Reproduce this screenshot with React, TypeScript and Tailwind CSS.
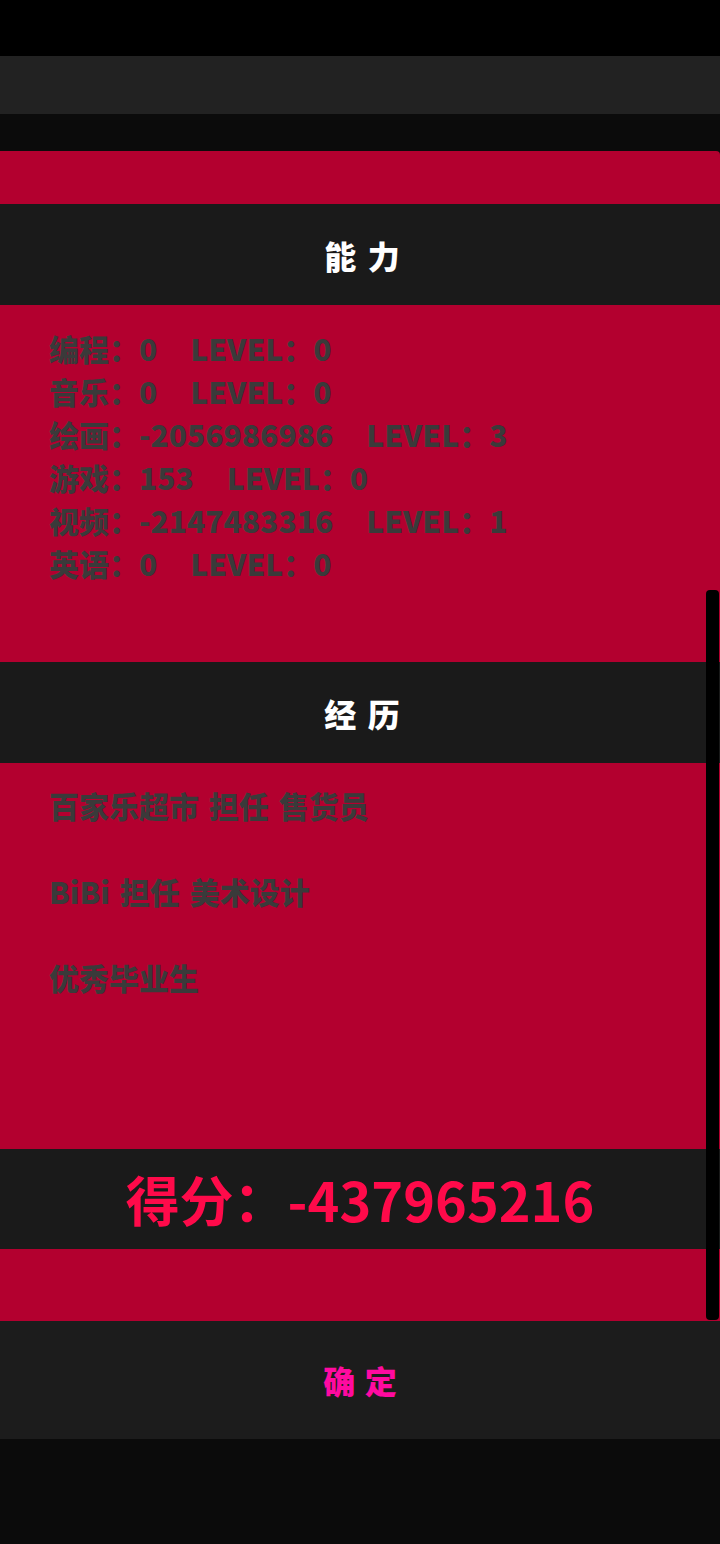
import React from "react";

const F = { fontFamily: '"Noto Sans CJK SC", "Noto Sans", sans-serif' };

const abilities = [
  ["编程", "0", "0"],
  ["音乐", "0", "0"],
  ["绘画", "-2056986986", "3"],
  ["游戏", "153", "0"],
  ["视频", "-2147483316", "1"],
  ["英语", "0", "0"],
];

const exp = ["百家乐超市 担任 售货员", "BiBi 担任 美术设计", "优秀毕业生"];

export default function App() {
  return (
    <div className="relative w-[720px] h-[1544px] bg-[#0b0b0b] overflow-hidden" style={F}>
      <div className="h-[56px] bg-black" />
      <div className="h-[58px] bg-[#222222]" />
      <div className="h-[37px] bg-[#0b0b0b]" />
      <div className="h-[53px] bg-[#b3002f] rounded-tr-[4px]" />
      <div className="h-[101px] bg-[#1a1a1a] flex items-center justify-center">
        <span className="text-white font-black text-[32px] leading-none pl-[4px] [word-spacing:4px]">能 力</span>
      </div>
      <div className="h-[357px] bg-[#b3002f] pl-[49px] pt-[21px] flex flex-col">
        {abilities.map(([n, v, l]) => (
          <div key={n} className="h-[43px] flex items-center text-[30px] font-black text-[#3a3a3a] whitespace-pre leading-none">
            <span>{n}：{v}</span>
            <span className="ml-[33px]">LEVEL：{l}</span>
          </div>
        ))}
      </div>
      <div className="h-[101px] bg-[#1a1a1a] flex items-center justify-center">
        <span className="text-white font-black text-[32px] leading-none pl-[4px] [word-spacing:4px]">经 历</span>
      </div>
      <div className="h-[386px] bg-[#b3002f] pl-[49px] pt-[20px] flex flex-col gap-[43px]">
        {exp.map((e) => (
          <div key={e} className="h-[43px] flex items-center text-[30px] font-black text-[#3a3a3a] leading-none whitespace-pre [word-spacing:3px]">
            {e}
          </div>
        ))}
      </div>
      <div className="h-[100px] bg-[#1a1a1a] flex items-center justify-center">
        <span className="text-[#ff0a4a] font-bold text-[54px] leading-none">得分：-437965216</span>
      </div>
      <div className="h-[72px] bg-[#b3002f]" />
      <div className="h-[118px] bg-[#1c1c1c] flex items-center justify-center">
        <span className="text-[#ff0aa0] font-black text-[32px] leading-none [word-spacing:2px]">确 定</span>
      </div>
      <div className="absolute left-[706px] top-[590px] w-[13px] h-[730px] bg-black rounded-[4px]" />
    </div>
  );
}
